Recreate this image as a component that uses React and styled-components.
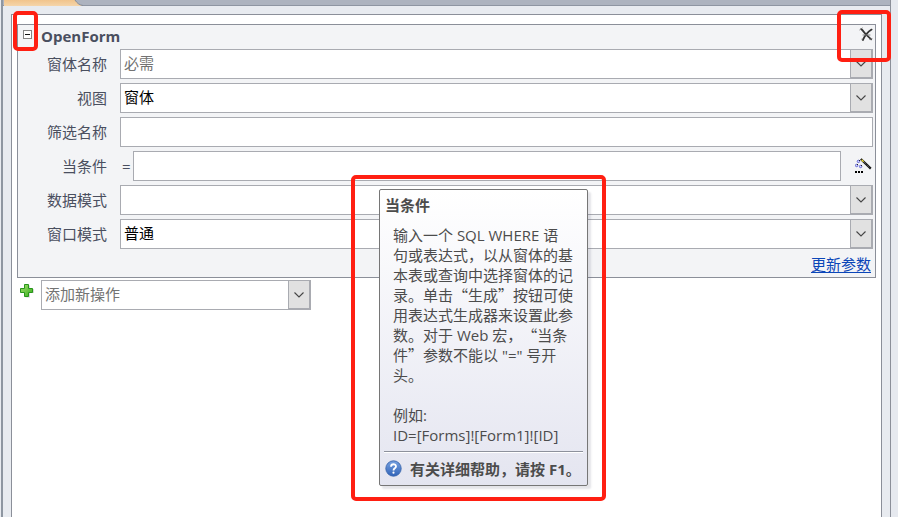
import React from "react";
import styled, { createGlobalStyle } from "styled-components";

const LINE = "#8b8f99";
const FIELD_LINE = "#a9abb1";
const RED = "#ff1f12";

const GlobalStyle = createGlobalStyle`
  *, *::before, *::after { box-sizing: border-box; }
  body {
    margin: 0;
    font-family: "Open Sans", "Noto Sans CJK SC", sans-serif;
    font-size: 15px;
    line-height: 20px;
    color: #4a4f5f;
    overflow: hidden;
  }
  button, input, select { font: inherit; }
`;

const Page = styled.div`
  display: flex;
  height: 100vh;
  overflow: hidden;
  background: #e8ebf0;
`;

const LeftEdge = styled.div`
  flex: none;
  width: 3px;
  border-right: 2px solid #8e96a1;
`;

const RightEdge = styled.div`
  flex: none;
  width: 7px;
  background: #e6e9ef;
`;

const Main = styled.main`
  flex: 1;
  min-width: 0;
  display: flex;
  flex-direction: column;
  border-right: 1px solid ${LINE};
`;

const TabStrip = styled.div`
  flex: none;
  height: 6px;
  display: flex;
  background: #adb3bf;
  border-bottom: 1px solid #8e95a2;
`;

const TabShape = styled.svg`
  display: block;
  width: 80px;
  height: 6px;
`;

const Body = styled.div`
  flex: 1;
  display: flex;
  padding: 8px 8px 0;
`;

const Panel = styled.section`
  flex: 1;
  min-width: 0;
  background: #fff;
  border: 1px solid ${LINE};
  border-bottom: 0;
  padding: 9px 5px 0;
`;

const ActionBox = styled.form`
  background: #f3f4f6;
  border: 1px solid ${LINE};
  padding: 0 2px 0 0;
`;

const Header = styled.header`
  display: flex;
  align-items: flex-start;
  height: 24px;
  padding: 1px 0 0 5px;
`;

const Marked = styled.span`
  position: relative;
  display: flex;
`;

const CollapseSlot = styled(Marked)`
  margin-top: 4px;
`;

const DeleteSlot = styled(Marked)`
  margin-top: 1px;
`;

const Mark = styled.span`
  position: absolute;
  inset: ${(p) => p.$inset};
  border: 4px solid ${RED};
  border-radius: 5px;
  pointer-events: none;
  z-index: 3;
`;

const IconButton = styled.button`
  display: flex;
  padding: 0;
  border: 0;
  background: none;
  cursor: pointer;
`;

const Title = styled.h1`
  flex: 1;
  margin: 0 0 0 9px;
  font-size: 15px;
  line-height: 20px;
  font-weight: 700;
`;

const Rows = styled.div`
  display: grid;
  gap: 4px;
`;

const Row = styled.div`
  display: grid;
  grid-template-columns: 89px minmax(0, 1fr);
  column-gap: 13px;
  align-items: center;
`;

const Label = styled.label`
  text-align: right;
`;

const Combo = styled.div`
  display: grid;
  align-items: stretch;
  width: ${(p) => p.$width || "auto"};
`;

const Select = styled.select`
  grid-area: 1 / 1;
  appearance: none;
  width: 100%;
  height: 30px;
  margin: 0;
  padding: 0 26px 3px 3px;
  border: 1px solid ${FIELD_LINE};
  border-radius: 0;
  background: #fff;
  color: ${(p) => (p.$muted ? "#737373" : "#000")};
`;

const Arrow = styled.span`
  grid-area: 1 / 1;
  justify-self: end;
  display: flex;
  align-items: center;
  justify-content: center;
  width: 23px;
  border: 1px solid ${FIELD_LINE};
  border-right-width: 2px;
  border-bottom-width: 2px;
  background: #e1e1e1;
  pointer-events: none;
`;

const TextInput = styled.input`
  width: 100%;
  height: 30px;
  margin: 0;
  padding: 0 3px 2px;
  border: 1px solid ${FIELD_LINE};
  border-radius: 0;
  background: #fff;
  color: #000;
`;

const Expression = styled.div`
  display: grid;
  grid-template-columns: 13px minmax(0, 1fr) 32px;
  align-items: center;
`;

const Equals = styled.span`
  padding-left: 2px;
`;

const ExpressionField = styled.div`
  position: relative;
  display: flex;
`;

const BuildButton = styled(IconButton)`
  justify-self: end;
  padding-right: 1px;
`;

const Footer = styled.footer`
  display: flex;
  justify-content: flex-end;
  height: 28px;
  padding: 5px 2px 0 0;
`;

const Link = styled.a`
  color: #0b46b8;
  text-decoration: underline;
  text-underline-offset: 2px;
`;

const AddRow = styled.div`
  display: flex;
  margin-top: 2px;
  padding-left: 3px;
  gap: 7px;
`;

const PlusIcon = styled.svg`
  margin-top: 3px;
`;

const Tooltip = styled.aside`
  position: absolute;
  left: 246px;
  top: 38px;
  z-index: 2;
  width: 209px;
  padding: 5px 4px 0;
  border: 1px solid #767676;
  border-radius: 2px;
  background: linear-gradient(#ffffff, #e4e5f0);
  box-shadow: 3px 3px 2px rgba(90, 90, 110, 0.16);
  color: #4c4c4c;
`;

const TipTitle = styled.h2`
  margin: 0 0 10px 1px;
  font-size: 15px;
  line-height: 20px;
  font-weight: 700;
`;

const TipText = styled.p`
  margin: 0 0 6px 9px;
  white-space: nowrap;
  text-spacing-trim: space-all;
`;

const Cjk = styled.span`
  font-family: "Noto Sans CJK SC", sans-serif;
`;

const TipFooter = styled.div`
  display: flex;
  align-items: center;
  gap: 8px;
  height: 34px;
  padding: 0 0 0 1px;
  border-top: 1px solid #8d919c;
  box-shadow: inset 0 1px 0 #fff;
  font-weight: 700;
  white-space: nowrap;
`;

function Chevron() {
  return (
    <svg width="10" height="6" viewBox="0 0 10 6" fill="none" aria-hidden="true">
      <path d="M0.5 0.5 L5 5 L9.5 0.5" stroke="#454545" strokeWidth="1.1" />
    </svg>
  );
}

function ComboField({ id, value, muted, width, label }) {
  return (
    <Combo $width={width}>
      <Select id={id} $muted={muted} aria-label={label} defaultValue={value}>
        <option value={value}>{value}</option>
      </Select>
      <Arrow>
        <Chevron />
      </Arrow>
    </Combo>
  );
}

function CollapseIcon() {
  return (
    <svg width="9" height="9" viewBox="0 0 9 9" aria-hidden="true">
      <rect x="0.5" y="0.5" width="8" height="8" fill="#fff" stroke="#858585" />
      <path d="M2 4.5H7" stroke="#111" />
    </svg>
  );
}

function DeleteIcon() {
  return (
    <svg width="14" height="15" viewBox="0 0 14 15" fill="none" strokeLinecap="round" aria-hidden="true">
      <path d="M2.2 2 C4 3.6 5.4 5.8 7.4 8 L12.2 12.4" stroke="#333" strokeWidth="1.7" />
      <path d="M12.6 2.6 C9.4 4.6 6 8.4 3.8 13" stroke="#333" strokeWidth="1.8" />
      <path d="M0.8 2.8 L3.2 1 M10.8 12.4 L13 11.8 M2.8 12.4 L4.6 13.6 M4 8 H11" stroke="#777" strokeWidth="0.9" />
    </svg>
  );
}

function WandIcon() {
  return (
    <svg width="17" height="16" viewBox="0 0 17 16" fill="none" aria-hidden="true">
      <path d="M5.8 1 L15.8 10.6" stroke="#111" strokeWidth="2.2" />
      <path d="M9 4.1 L15 9.8" stroke="#a5a5a5" strokeWidth="0.7" strokeDasharray="1 1" />
      <path d="M6.6 1.8 L8.6 3.7" stroke="#f2df35" strokeWidth="1.3" />
      <g fill="#d9daff" stroke="#5459cf" strokeWidth="0.9">
        <circle cx="3.4" cy="3.4" r="1.2" />
        <circle cx="1.6" cy="7.5" r="1.2" />
        <circle cx="5.6" cy="8.5" r="1.2" />
      </g>
      <path d="M4 2.5H5 M2 6.5H3 M6 7.5H7" stroke="#222" />
      <path d="M0 14H2 M3 14H5 M6 14H8" stroke="#000" strokeWidth="2" />
    </svg>
  );
}

function Plus() {
  return (
    <PlusIcon width="14" height="15" viewBox="0 0 14 15" aria-hidden="true">
      <defs>
        <linearGradient id="plusFill" x1="0" y1="0" x2="1" y2="1">
          <stop offset="0" stopColor="#a4e06e" />
          <stop offset="1" stopColor="#36ad1b" />
        </linearGradient>
      </defs>
      <path d="M5.5 2.5H10V6H14V10H10V14.5H5.5V10H1.5V6H5.5Z" fill="#d9d9d9" />
      <path d="M4.5 1.5H8.5V5.5H12.5V9.5H8.5V13.5H4.5V9.5H0.5V5.5H4.5Z" fill="url(#plusFill)" stroke="#27951a" />
    </PlusIcon>
  );
}

function HelpIcon() {
  return (
    <svg width="17" height="17" viewBox="0 0 17 17" aria-hidden="true">
      <defs>
        <linearGradient id="helpFill" x1="0" y1="0" x2="0" y2="1">
          <stop offset="0" stopColor="#78a2e0" />
          <stop offset="1" stopColor="#2f62b8" />
        </linearGradient>
      </defs>
      <circle cx="8.5" cy="8.5" r="7.7" fill="url(#helpFill)" stroke="#3b67ae" strokeWidth="0.9" />
      <path d="M6 6.7 C6 3.4 11 3.6 11 6.4 C11 8.3 8.5 8.3 8.5 10.4" fill="none" stroke="#fff" strokeWidth="1.8" />
      <circle cx="8.5" cy="12.7" r="1.1" fill="#fff" />
    </svg>
  );
}

function ConditionTip() {
  return (
    <Tooltip role="tooltip" id="where-tip">
      <Mark $inset="-15px -19px -16px -29px" />
      <TipTitle>当条件</TipTitle>
      <TipText>
        输入一个 SQL WHERE 语<br />
        句或表达式，以从窗体的基<br />
        本表或查询中选择窗体的记<br />
        <Cjk>录。单击“生成”按钮可使</Cjk><br />
        用表达式生成器来设置此参<br />
        数。对于 Web <Cjk>宏，“当条</Cjk><br />
        <Cjk>件”参数不能以</Cjk> "=" 号开<br />
        头。<br />
        <br />
        例如:<br />
        ID=[Forms]![Form1]![ID]
      </TipText>
      <TipFooter>
        <HelpIcon />
        <span>有关详细帮助，请按 F1。</span>
      </TipFooter>
    </Tooltip>
  );
}

export default function App() {
  return (
    <>
      <GlobalStyle />
      <Page>
        <LeftEdge />
        <Main>
          <TabStrip>
            <TabShape viewBox="0 0 80 6" aria-hidden="true">
              <defs>
                <linearGradient id="tabFill" x1="0" y1="0" x2="0" y2="1">
                  <stop offset="0" stopColor="#f1c48c" />
                  <stop offset="1" stopColor="#f5d5aa" />
                </linearGradient>
              </defs>
              <path d="M1 0H72C74 3 76 5 80 6H1Z" fill="url(#tabFill)" />
              <path d="M72 0C74 3 76 5 80 5.5" fill="none" stroke="#858d9a" />
            </TabShape>
          </TabStrip>
          <Body>
            <Panel>
              <ActionBox onSubmit={(e) => e.preventDefault()}>
                <Header>
                  <CollapseSlot>
                    <IconButton type="button" aria-label="折叠">
                      <CollapseIcon />
                    </IconButton>
                    <Mark $inset="-19px -6px -12px -10px" />
                  </CollapseSlot>
                  <Title>OpenForm</Title>
                  <DeleteSlot>
                    <IconButton type="button" aria-label="删除">
                      <DeleteIcon />
                    </IconButton>
                    <Mark $inset="-17px -18px -20px -22px" />
                  </DeleteSlot>
                </Header>
                <Rows>
                  <Row>
                    <Label htmlFor="form-name">窗体名称</Label>
                    <ComboField id="form-name" value="必需" muted />
                  </Row>
                  <Row>
                    <Label htmlFor="view">视图</Label>
                    <ComboField id="view" value="窗体" />
                  </Row>
                  <Row>
                    <Label htmlFor="filter">筛选名称</Label>
                    <TextInput id="filter" type="text" />
                  </Row>
                  <Row>
                    <Label htmlFor="where">当条件</Label>
                    <Expression>
                      <Equals>=</Equals>
                      <ExpressionField>
                        <TextInput id="where" type="text" aria-describedby="where-tip" />
                        <ConditionTip />
                      </ExpressionField>
                      <BuildButton type="button" aria-label="生成">
                        <WandIcon />
                      </BuildButton>
                    </Expression>
                  </Row>
                  <Row>
                    <Label htmlFor="data-mode">数据模式</Label>
                    <ComboField id="data-mode" value="" />
                  </Row>
                  <Row>
                    <Label htmlFor="window-mode">窗口模式</Label>
                    <ComboField id="window-mode" value="普通" />
                  </Row>
                </Rows>
                <Footer>
                  <Link href="#update">更新参数</Link>
                </Footer>
              </ActionBox>
              <AddRow>
                <Plus />
                <ComboField value="添加新操作" label="添加新操作" muted width="270px" />
              </AddRow>
            </Panel>
          </Body>
        </Main>
        <RightEdge />
      </Page>
    </>
  );
}
